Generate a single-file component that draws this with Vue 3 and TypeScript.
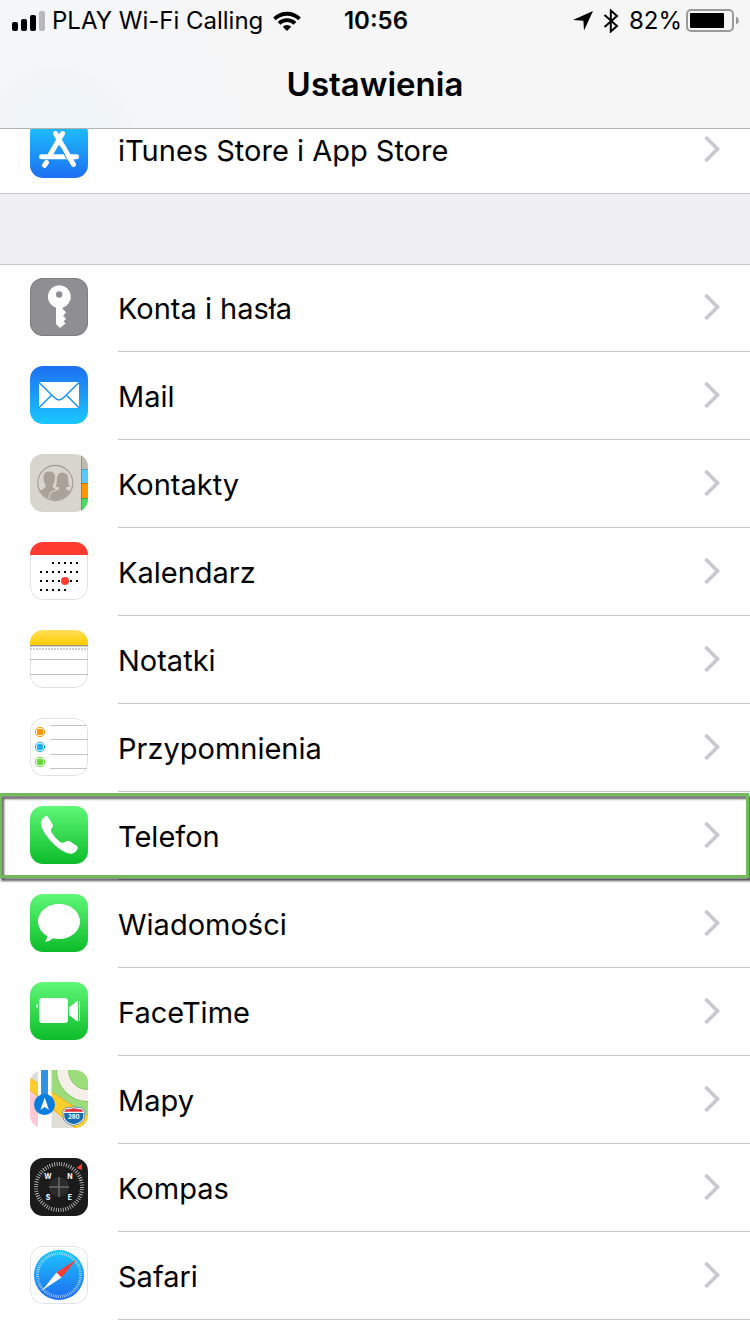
<script setup lang="ts">
interface SettingsRow {
  id: string
  label: string
  highlighted?: boolean
}

const storeRows: SettingsRow[] = [{ id: 'appstore', label: 'iTunes Store i App Store' }]

const appRows: SettingsRow[] = [
  { id: 'accounts', label: 'Konta i hasła' },
  { id: 'mail', label: 'Mail' },
  { id: 'contacts', label: 'Kontakty' },
  { id: 'calendar', label: 'Kalendarz' },
  { id: 'notes', label: 'Notatki' },
  { id: 'reminders', label: 'Przypomnienia' },
  { id: 'phone', label: 'Telefon', highlighted: true },
  { id: 'messages', label: 'Wiadomości' },
  { id: 'facetime', label: 'FaceTime' },
  { id: 'maps', label: 'Mapy' },
  { id: 'compass', label: 'Kompas' },
  { id: 'safari', label: 'Safari' },
]

const groups: SettingsRow[][] = [storeRows, appRows]

// Calendar dots: [row y, first column, last column]
const dotRows: [number, number, number][] = [
  [20, 2, 6],
  [29, 0, 6],
  [38, 0, 6],
  [47, 0, 4],
]
const calendarDots = dotRows.flatMap(([y, from, to]) =>
  Array.from({ length: to - from + 1 }, (_, i) => ({ x: 10 + (from + i) * 6, y })),
)

const reminders = [
  { y: 14, color: '#ff9500' },
  { y: 29, color: '#1badf8' },
  { y: 44, color: '#63da38' },
]
</script>

<template>
  <div class="screen">
    <header class="top">
      <div class="status">
        <div class="status-left">
          <svg class="signal" width="34" height="22" viewBox="0 0 34 22" aria-hidden="true">
            <rect x="0" y="12" width="6" height="9" rx="2" />
            <rect x="9" y="9" width="6" height="12" rx="2" />
            <rect x="18" y="5" width="6" height="16" rx="2" />
            <rect x="27" y="1" width="6" height="20" rx="2" fill="#b9b9b9" />
          </svg>
          <span>PLAY Wi-Fi Calling</span>
          <svg class="wifi" width="28" height="20" viewBox="0 0 28 20" aria-hidden="true">
            <g fill="none" stroke="#000" stroke-width="3.8">
              <path d="M1.5 7.8a18 18 0 0 1 25 0" />
              <path d="M6 12.4a11.5 11.5 0 0 1 16 0" />
            </g>
            <path d="M14 20l-4.2-4.2a6 6 0 0 1 8.4 0z" />
          </svg>
        </div>
        <time class="clock">10:56</time>
        <div class="status-right">
          <svg class="location" width="20" height="20" viewBox="0 0 20 20" aria-hidden="true">
            <path d="M20 0L11 19.5 10.4 9.8 0 9z" />
          </svg>
          <svg class="bluetooth" width="16" height="24" viewBox="0 0 16 24" aria-hidden="true">
            <path d="M1.5 6L14 17 7.8 22.5V1.5L14 7 1.5 18" fill="none" stroke="#000" stroke-width="2" />
          </svg>
          <span>82%</span>
          <svg class="battery" width="54" height="24" viewBox="0 0 54 24" aria-hidden="true">
            <rect x="1" y="1" width="46" height="21" rx="4" fill="none" stroke="#9a9a9a" stroke-width="2" />
            <rect x="4" y="4" width="34" height="15" rx="1" />
            <path d="M50 7.5q3 1.5 3 4t-3 4z" fill="#9a9a9a" />
          </svg>
        </div>
      </div>
      <h1>Ustawienia</h1>
    </header>

    <main class="content">
      <ul v-for="(rows, g) in groups" :key="g" class="group">
        <li v-for="row in rows" :key="row.id" class="row">
          <a :href="'#' + row.id" class="link">
            <svg class="icon" width="58" height="58" viewBox="0 0 58 58" aria-hidden="true">
              <g v-if="row.id === 'appstore'">
                <linearGradient id="g-store" x2="0" y2="1">
                  <stop stop-color="#1dc9fd" />
                  <stop offset="1" stop-color="#1d6ff2" />
                </linearGradient>
                <rect width="58" height="58" fill="url(#g-store)" />
                <path
                  d="M32.5 13.5L20 35M25.5 13.5L43.5 44.5M11.5 36.7H46.5M16.5 42.5L14.5 45.3"
                  fill="none"
                  stroke="#fff"
                  stroke-width="5"
                  stroke-linecap="round"
                />
                <path d="M30.8 27.5L36.5 38.5" fill="none" stroke="#1d93f8" stroke-width="1" />
              </g>

              <g v-else-if="row.id === 'accounts'">
                <rect width="58" height="58" fill="#8e8e93" />
                <path
                  d="M29.3 7.2a11.5 11.5 0 0 1 3.4 22.5V31l3.6 3.6-3.2 3.2 3 3.2-2.5 2.2 2 2.2L30 50l-4-4V29.7A11.5 11.5 0 0 1 29.3 7.2z"
                  fill="#fff"
                />
                <circle cx="29.2" cy="16.5" r="3.2" fill="#8e8e93" />
                <rect x=".5" y=".5" width="57" height="57" rx="12.5" fill="none" stroke="#7e7e82" />
              </g>

              <g v-else-if="row.id === 'mail'">
                <linearGradient id="g-mail" x2="0" y2="1">
                  <stop stop-color="#1e6ff1" />
                  <stop offset="1" stop-color="#1ac8fd" />
                </linearGradient>
                <rect width="58" height="58" fill="url(#g-mail)" />
                <rect x="9" y="16" width="40" height="26" fill="#fff" />
                <g fill="none" stroke="#1c95f7" stroke-width="1.5">
                  <path d="M9 16.5L24 31.3Q29 36.5 34 31.3L49 16.5M9 41.8L21.5 29.3M49 41.8L36.5 29.3" />
                </g>
              </g>

              <g v-else-if="row.id === 'contacts'">
                <rect width="58" height="58" fill="#d8d5cc" />
                <clipPath id="c-people"><circle cx="25.3" cy="29" r="17" /></clipPath>
                <g clip-path="url(#c-people)" fill="#a9a299">
                  <path d="M13.5 23q0-5.5 5.8-5.5t5.8 5.5q.2 5-2.4 8.5.2 3 3.8 4l-7 11H7V37q8.5-1.5 8.8-5.5-2.5-3.5-2.3-8.5z" />
                  <path
                    d="M19 47q-.5-8.500 4.500-10 5-1 5.200-3l-4-.8q1.500-2 1.500-8 0-7.200 6.300-7.200t6.300 7.200q0 6 1.700 8l-4 .8q.3 2 5.500 3.200V47z"
                    stroke="#d8d5cc"
                    stroke-width="1.2"
                  />
                </g>
                <circle cx="25.3" cy="29" r="17.5" fill="none" stroke="#a9a299" stroke-width="1.3" />
                <rect x="51" width="7" height="15" fill="#bebab1" />
                <rect x="51" y="15" width="7" height="14" fill="#5ac8fa" />
                <rect x="51" y="29" width="7" height="15" fill="#ff9500" />
                <rect x="51" y="44" width="7" height="14" fill="#4cd964" />
                <path d="M51.5 0V58" stroke="#000" stroke-opacity=".2" />
                <path d="M51 15.5h7M51 29.5h7M51 44.5h7" stroke="#000" stroke-opacity=".2" />
              </g>

              <g v-else-if="row.id === 'calendar'">
                <rect width="58" height="58" fill="#fff" />
                <rect x=".5" y=".5" width="57" height="57" rx="12.5" fill="none" stroke="#e1e1e1" />
                <rect width="58" height="13" fill="#ff3b30" />
                <rect v-for="(d, i) in calendarDots" :key="i" :x="d.x" :y="d.y" width="2" height="2" fill="#000" />
                <circle cx="35" cy="39" r="4" fill="#ff3b30" />
              </g>

              <g v-else-if="row.id === 'notes'">
                <linearGradient id="g-notes" x2="0" y2="1">
                  <stop stop-color="#ffdf5c" />
                  <stop offset="1" stop-color="#ffcc00" />
                </linearGradient>
                <rect width="58" height="58" fill="#fff" />
                <rect x=".5" y=".5" width="57" height="57" rx="12.5" fill="none" stroke="#dedede" />
                <rect width="58" height="15" fill="url(#g-notes)" />
                <rect y="15" width="58" height="1" fill="#9b9684" />
                <rect y="16" width="58" height="1" fill="#cfcfd0" />
                <path d="M0 19H58" stroke="#cfcfd0" stroke-width="2" stroke-dasharray="2 1" />
                <path d="M0 29.5H58M0 44.5H58" stroke="#c0c0c4" />
              </g>

              <g v-else-if="row.id === 'reminders'">
                <rect width="58" height="58" fill="#fff" />
                <rect x=".5" y=".5" width="57" height="57" rx="12.5" fill="none" stroke="#e1e1e1" />
                <path d="M20 7.5H57M20 21.5H58M20 36.5H58M20 50.5H57" stroke="#c3c3c6" />
                <template v-for="r in reminders" :key="r.y">
                  <circle cx="10" :cy="r.y" r="4.6" fill="none" :stroke="r.color" stroke-width="1" />
                  <circle cx="10" :cy="r.y" r="3.2" :fill="r.color" />
                </template>
              </g>

              <g v-else-if="row.id === 'phone'">
                <linearGradient id="g-phone" x2="0" y2="1">
                  <stop stop-color="#5ff777" />
                  <stop offset="1" stop-color="#0cbc29" />
                </linearGradient>
                <rect width="58" height="58" fill="url(#g-phone)" />
                <path
                  d="M15.5 10.3q1.5-.8 2.5.7l4.8 7.7q.7 1-.2 2.1l-1.4 2.2q-.7 1.3.2 3 3.7 6.5 9.3 10.2 1.5.9 2.9.2l3.4-1.5q1.3-.5 2.4.1l7.3 4.8q1.6 1 .9 2.6-2 5-6.6 5.3-7 .2-17.500-9.600Q11.300 25.500 10.800 17q0-4 4.700-6.700z"
                  fill="#fff"
                />
              </g>

              <g v-else-if="row.id === 'messages'">
                <linearGradient id="g-messages" x2="0" y2="1">
                  <stop stop-color="#5ff777" />
                  <stop offset="1" stop-color="#0cbc29" />
                </linearGradient>
                <rect width="58" height="58" fill="url(#g-messages)" />
                <path
                  d="M29 10C17.5 10 8 17.700 8 27.500c0 6 3.600 11.300 9.200 14.400q0 3-2.200 6 5-.6 8-3.600 2.900.7 6 .7c11.500 0 21-7.700 21-17.500S40.500 10 29 10z"
                  fill="#fff"
                />
              </g>

              <g v-else-if="row.id === 'facetime'">
                <linearGradient id="g-facetime" x2="0" y2="1">
                  <stop stop-color="#5ff777" />
                  <stop offset="1" stop-color="#0cbc29" />
                </linearGradient>
                <rect width="58" height="58" fill="url(#g-facetime)" />
                <rect x="9" y="16" width="29" height="25" rx="3.5" fill="#fff" />
                <path d="M39 25.3L47 19.2h1v20h-1L39 33zM49 19h1v20h-1zM8 22v4q-2-.5-2-2t2-2z" fill="#fff" />
              </g>

              <g v-else-if="row.id === 'maps'">
                <rect width="58" height="58" fill="#e0ddd5" />
                <path d="M21 0H58V48L21 27z" fill="#9ddc7b" />
                <path d="M0 16L8 22V58H0z" fill="#ffc8d5" />
                <path d="M0 8L58 46V58H44L0 20z" fill="#ffcd2e" />
                <path d="M0 8L58 46M0 20L46 58" fill="none" stroke="#efb51d" />
                <circle cx="58" cy="0" r="25.5" fill="none" stroke="#8bcb6b" stroke-width="13" />
                <circle cx="58" cy="0" r="25.5" fill="none" stroke="#f4f0e8" stroke-width="11" />
                <rect x="8" width="13.5" height="58" fill="#fff" />
                <rect x="11" width="7" height="30" fill="#3192e3" />
                <circle cx="14.5" cy="34.5" r="10.5" fill="#087de0" />
                <path d="M14.7 27.5L19 40l-4.300-3-4.300 3z" fill="#fff" />
                <path
                  d="M36 37.5q3.8 1.2 7.7-.8 4 2 7.8.8l3.6 4.200q-1.400 2.200-.6 5-.5 6.600-10.800 8.800Q33.400 53.300 33 46.700q.8-2.800-.6-5z"
                  fill="#fff"
                  stroke="#477fad"
                  stroke-width=".8"
                />
                <path d="M36.2 39q4 .7 7.5-1 3.7 1.700 7.500 1l2.300 2.700H34z" fill="#e0323a" />
                <path d="M34 43H53.6q-.7 2-.3 4-.5 5-9.500 7.200-9-2.200-9.500-7.200.3-2-.3-4z" fill="#176bb0" />
                <text class="shield" x="43.8" y="49" text-anchor="middle">280</text>
              </g>

              <g v-else-if="row.id === 'compass'">
                <rect width="58" height="58" fill="#1b1b1c" />
                <circle
                  cx="29"
                  cy="29"
                  r="23"
                  fill="none"
                  stroke="#c9c9c9"
                  stroke-width="4"
                  pathLength="180"
                  stroke-dasharray="1 2"
                />
                <circle cx="29" cy="29" r="10" fill="#2b2b2c" />
                <path d="M29 19V39M19 29H39" stroke="#6b6b6c" stroke-width="1.5" />
                <path d="M52 5.5V12L46.5 10z" fill="#ff3b30" />
                <g class="points" text-anchor="middle">
                  <text x="18" y="21">W</text>
                  <text x="40" y="21">N</text>
                  <text x="18" y="42">S</text>
                  <text x="40" y="42">E</text>
                </g>
              </g>

              <g v-else>
                <linearGradient id="g-safari" x2="0" y2="1">
                  <stop stop-color="#1cc5fc" />
                  <stop offset="1" stop-color="#1e6cf1" />
                </linearGradient>
                <rect width="58" height="58" fill="#fff" />
                <rect x=".5" y=".5" width="57" height="57" rx="12.5" fill="none" stroke="#e1e1e1" />
                <circle cx="29" cy="29" r="25" fill="url(#g-safari)" />
                <circle
                  cx="29"
                  cy="29"
                  r="21.5"
                  fill="none"
                  stroke="#fff"
                  stroke-opacity=".75"
                  stroke-width="3"
                  pathLength="144"
                  stroke-dasharray=".7 1.3"
                />
                <path d="M46.5 13.5L31.5 31.5 26.5 26.5z" fill="#ff3b30" />
                <path d="M12 44.5L26.5 26.5 31.5 31.5z" fill="#fff" />
              </g>
            </svg>
            <span class="label">{{ row.label }}</span>
            <svg class="chevron" width="16" height="28" viewBox="0 0 16 28" aria-hidden="true">
              <path d="M1.5 2L13.5 14 1.5 26" fill="none" stroke="#c7c7cc" stroke-width="3.5" />
            </svg>
          </a>
          <span v-if="row.highlighted" class="highlight"></span>
        </li>
      </ul>
    </main>
  </div>
</template>

<style>
body {
  margin: 0;
  background: #fff;
}
</style>

<style scoped>
.screen {
  min-height: 100vh;
  overflow: hidden;
  background: #fff;
  color: #000;
  font-family: Inter, Roboto, "Liberation Sans", sans-serif;
}

.top {
  position: relative;
  z-index: 1;
  border-bottom: 1px solid #b2b2b2;
  background: radial-gradient(circle at 58px 140px, #eff5f9 0 40px, #f5f6f8 90px, #f6f6f7 200px);
}

.status {
  display: grid;
  grid-template-columns: 1fr auto 1fr;
  align-items: center;
  height: 42px;
  padding: 0 10px 0 12px;
  font-size: 24px;
  line-height: 42px;
  white-space: nowrap;
}

.status-left,
.status-right {
  display: flex;
  align-items: center;
}

.status-right {
  justify-content: flex-end;
}

.signal {
  margin-right: 6px;
}

.wifi {
  margin-left: 10px;
}

.clock {
  font-weight: 600;
}

.location {
  margin-right: 10px;
}

.bluetooth {
  margin-right: 10px;
}

.battery {
  margin-left: 4px;
}

h1 {
  margin: 0;
  height: 86px;
  font-size: 33px;
  font-weight: 600;
  line-height: 84px;
  text-align: center;
}

.content {
  margin-top: -23px;
}

.group {
  margin: 0;
  padding: 0;
  list-style: none;
}

.group + .group {
  border-top: 70px solid #efeff4;
  box-shadow: inset 0 1px #c8c7cc;
}

.row {
  position: relative;
}

.link {
  display: flex;
  align-items: center;
  box-sizing: border-box;
  height: 88px;
  padding: 0 30px 2px;
  color: inherit;
  text-decoration: none;
}

.row::after {
  content: "";
  position: absolute;
  right: 0;
  bottom: 0;
  left: 118px;
  height: 1px;
  background: #c8c7cc;
}

.group:first-child .row::after {
  left: 0;
}

.icon {
  flex: none;
  border-radius: 13px;
}

.label {
  flex: 1;
  margin-left: 30px;
  padding-top: 4px;
  font-size: 29px;
  line-height: 36px;
}

.chevron {
  flex: none;
}

.highlight {
  position: absolute;
  z-index: 1;
  top: 1px;
  right: 1px;
  bottom: 2px;
  left: -1px;
  border: 3px solid #73ba5a;
  filter: drop-shadow(2px 3px 1px rgba(0, 0, 0, 0.65));
  pointer-events: none;
}

.shield {
  fill: #fff;
  font-size: 6px;
  font-weight: 700;
}

.points {
  fill: #fff;
  font-size: 7px;
  font-weight: 700;
}
</style>
